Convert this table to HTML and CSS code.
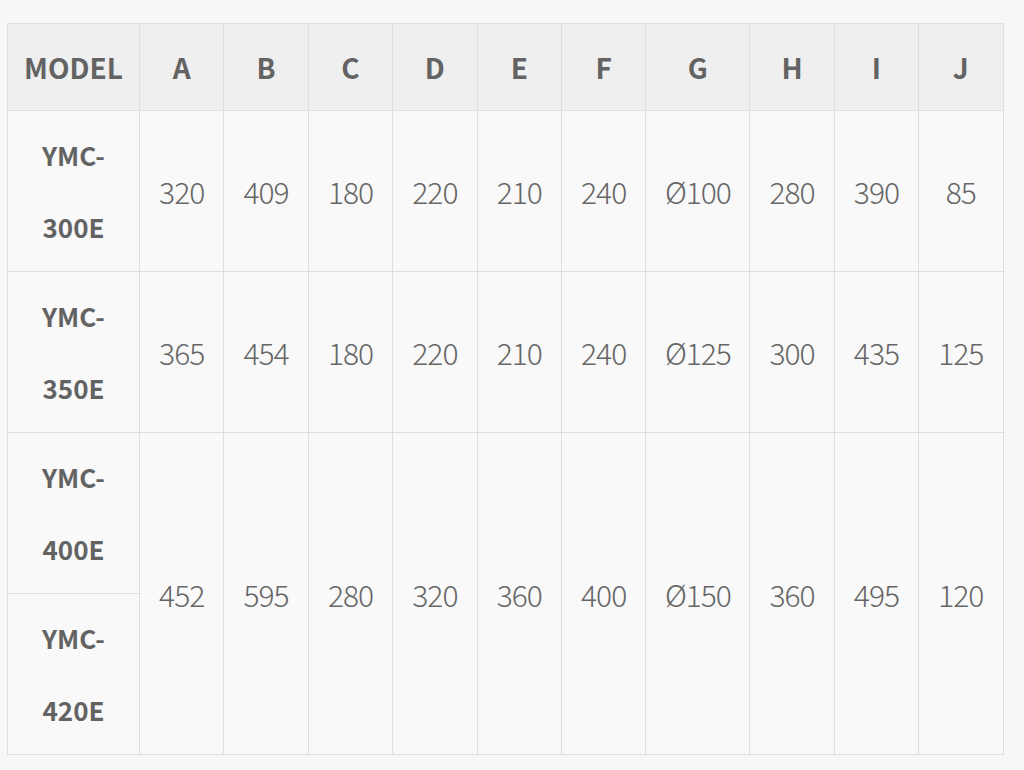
FILE: index.html
```html
<!DOCTYPE html>
<html>
<head>
<meta charset="utf-8">
<link rel="stylesheet" href="styles.css">
</head>
<body>
<div class="page">
<table class="spec">
<colgroup>
<col class="c-model"><col class="c-n"><col class="c-n"><col class="c-n"><col class="c-n"><col class="c-n"><col class="c-n"><col class="c-g"><col class="c-n"><col class="c-n"><col class="c-n">
</colgroup>
<thead>
<tr><th>MODEL</th><th>A</th><th>B</th><th>C</th><th>D</th><th>E</th><th>F</th><th>G</th><th>H</th><th>I</th><th>J</th></tr>
</thead>
<tbody>
<tr><td class="model">YMC-<br>300E</td><td>320</td><td>409</td><td>180</td><td>220</td><td>210</td><td>240</td><td>Ø100</td><td>280</td><td>390</td><td>85</td></tr>
<tr><td class="model">YMC-<br>350E</td><td>365</td><td>454</td><td>180</td><td>220</td><td>210</td><td>240</td><td>Ø125</td><td>300</td><td>435</td><td>125</td></tr>
<tr><td class="model">YMC-<br>400E</td><td rowspan="2">452</td><td rowspan="2">595</td><td rowspan="2">280</td><td rowspan="2">320</td><td rowspan="2">360</td><td rowspan="2">400</td><td rowspan="2">Ø150</td><td rowspan="2">360</td><td rowspan="2">495</td><td rowspan="2">120</td></tr>
<tr><td class="model">YMC-<br>420E</td></tr>
</tbody>
</table>
</div>
</body>
</html>
```

FILE: styles.css
```css
html, body {
  margin: 0;
  padding: 0;
  background: #f7f7f7;
}
.page {
  padding: 23px 0 0 7px;
}
.spec {
  border-collapse: collapse;
  table-layout: fixed;
  width: 996px;
  font-family: "Noto Sans CJK KR", "Noto Sans", sans-serif;
  color: #666666;
  background: #f9f9f9;
}
.c-model { width: 132px; }
.c-n { width: 84.4px; }
.c-g { width: 104px; }
.spec th, .spec td {
  border: 1px solid #dedede;
  text-align: center;
  vertical-align: middle;
  padding: 0;
}
.spec th {
  background: #efefef;
  height: 86px;
  font-weight: 700;
  font-size: 28px;
  color: #636363;
}
.spec td {
  height: 160px;
  font-weight: 300;
  font-size: 30px;
  letter-spacing: -1px;
  line-height: 44px;
}
.spec td.model {
  font-weight: 700;
  font-size: 26px;
  line-height: 72px;
  letter-spacing: 0;
  color: #636363;
}
```
